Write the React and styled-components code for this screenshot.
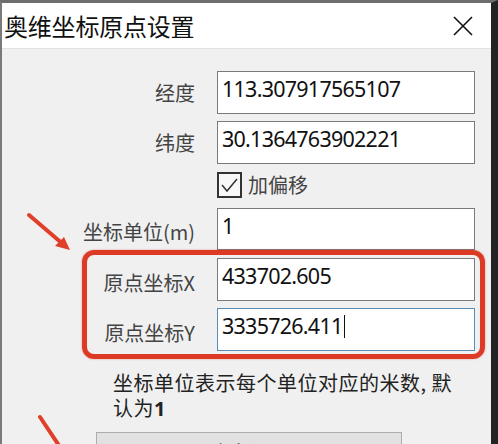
import React from "react";
import styled, { createGlobalStyle } from "styled-components";

const Global = createGlobalStyle`
  html, body { margin: 0; padding: 0; background: #2a2a2a; }
  body { font-family: "Noto Sans CJK SC", "Noto Sans", sans-serif; }
  * { box-sizing: border-box; }
`;

const Page = styled.div`
  position: relative;
  width: 498px;
  height: 444px;
  overflow: hidden;
`;

const Window = styled.div`
  width: 498px;
  height: 444px;
  border-top: 3px solid #6e6e6e;
  border-left: 2px solid #7a7a7a;
  border-right: 7px solid #232323;
  background: #f0f0f0;
  display: flex;
  flex-direction: column;
  overflow: hidden;
`;

const TitleBar = styled.div`
  height: 46px;
  flex: none;
  background: #ffffff;
  border-bottom: 1px solid #e2e2e2;
  display: flex;
  align-items: center;
  justify-content: space-between;
  padding: 0 18px 0 2px;
`;

const Title = styled.div`
  font-size: 24px;
  color: #111;
  letter-spacing: -0.2px;
  line-height: 1;
  padding-top: 1px;
`;

const CloseBtn = styled.div`
  width: 20px;
  height: 20px;
  display: flex;
  margin-top: 1px;
`;

const Body = styled.div`
  flex: 1;
  display: flex;
  flex-direction: column;
  padding-top: 22px;
`;

const Row = styled.div`
  display: grid;
  grid-template-columns: 193px 258px;
  column-gap: 22px;
  align-items: center;
  height: ${(p) => p.$h}px;
  margin-top: ${(p) => p.$mt || 0}px;
`;

const Label = styled.div`
  text-align: right;
  font-size: 20px;
  color: #444;
  white-space: nowrap;
  padding-top: ${(p) => p.$pt || 0}px;
`;

const TextBox = styled.div`
  height: 100%;
  background: #fff;
  border: 1px solid ${(p) => (p.$focus ? "#5a8db5" : "#7a7a7a")};
  padding: 0 4px;
  font-family: "Noto Sans", "Noto Sans CJK SC", sans-serif;
  font-size: 21.5px;
  line-height: 34px;
  color: #111;
  letter-spacing: -0.75px;
  white-space: nowrap;
  display: flex;
  align-items: flex-start;
`;

const Caret = styled.span`
  display: inline-block;
  width: 1px;
  height: 23px;
  background: #111;
  margin-top: 6px;
  margin-left: 1px;
`;

const CheckRow = styled.div`
  display: flex;
  align-items: center;
  gap: 6px;
`;

const CheckBox = styled.div`
  width: 25px;
  height: 26px;
  border: 2px solid #333;
  background: #f8f8f8;
  display: flex;
  align-items: center;
  justify-content: center;
`;

const CheckLabel = styled.div`
  font-size: 20px;
  color: #444;
`;

const Note = styled.div`
  margin: 19px 0 0 111px;
  width: 356px;
  font-size: 20px;
  letter-spacing: 0.5px;
  line-height: 25px;
  color: #222;
  b { font-family: "Noto Sans", sans-serif; font-weight: 700; }
`;

const Button = styled.div`
  margin: 11px 0 0 94px;
  width: 306px;
  height: 36px;
  flex: none;
  background: #e1e1e1;
  border: 1px solid #adadad;
  text-align: center;
  font-size: 20px;
  line-height: 40px;
  color: #222;
`;

const Highlight = styled.div`
  position: absolute;
  left: 82px;
  top: 250px;
  width: 403px;
  height: 109px;
  border: 5px solid #dc3a25;
  border-radius: 12px;
  box-shadow: 0 0 2px rgba(220, 58, 37, 0.5);
  pointer-events: none;
`;

const Annot = styled.svg`
  position: absolute;
  left: 0;
  top: 0;
  pointer-events: none;
`;

const fields = [
  { label: "经度", value: "113.307917565107", h: 43, mt: 0 },
  { label: "纬度", value: "30.1364763902221", h: 43, mt: 7 },
];

export default function App() {
  return (
    <>
      <Global />
      <Page>
        <Window>
          <TitleBar>
            <Title>奥维坐标原点设置</Title>
            <CloseBtn>
              <svg width="20" height="20" viewBox="0 0 20 20">
                <path d="M1 1 L19 19 M19 1 L1 19" stroke="#111" strokeWidth="1.6" />
              </svg>
            </CloseBtn>
          </TitleBar>
          <Body>
            {fields.map((f) => (
              <Row key={f.label} $h={f.h} $mt={f.mt}>
                <Label>{f.label}</Label>
                <TextBox>{f.value}</TextBox>
              </Row>
            ))}
            <Row $h={26} $mt={6}>
              <span />
              <CheckRow>
                <CheckBox>
                  <svg width="19" height="18" viewBox="0 0 19 18">
                    <path d="M2 9 L7 15 L17 3" fill="none" stroke="#333" strokeWidth="1.5" />
                  </svg>
                </CheckBox>
                <CheckLabel>加偏移</CheckLabel>
              </CheckRow>
            </Row>
            <Row $h={42} $mt={12}>
              <Label $pt={4}>坐标单位(m)</Label>
              <TextBox>1</TextBox>
            </Row>
            <Row $h={43} $mt={8}>
              <Label $pt={5}>原点坐标X</Label>
              <TextBox>433702.605</TextBox>
            </Row>
            <Row $h={43} $mt={7}>
              <Label $pt={5}>原点坐标Y</Label>
              <TextBox $focus>
                3335726.411
                <Caret />
              </TextBox>
            </Row>
            <Note>
              坐标单位表示每个单位对应的米数, 默认为<b>1</b>
            </Note>
            <Button>确定设置</Button>
          </Body>
        </Window>
        <Highlight />
        <Annot width="498" height="444" viewBox="0 0 498 444">
          <g stroke="#e0402a" strokeWidth="4" strokeLinecap="round" fill="none">
            <path d="M29 215 L64 245" />
            <path d="M40 417 L62 450" />
          </g>
          <path d="M70 250 L55 246 L64 237 Z" fill="#e0402a" />
        </Annot>
      </Page>
    </>
  );
}
